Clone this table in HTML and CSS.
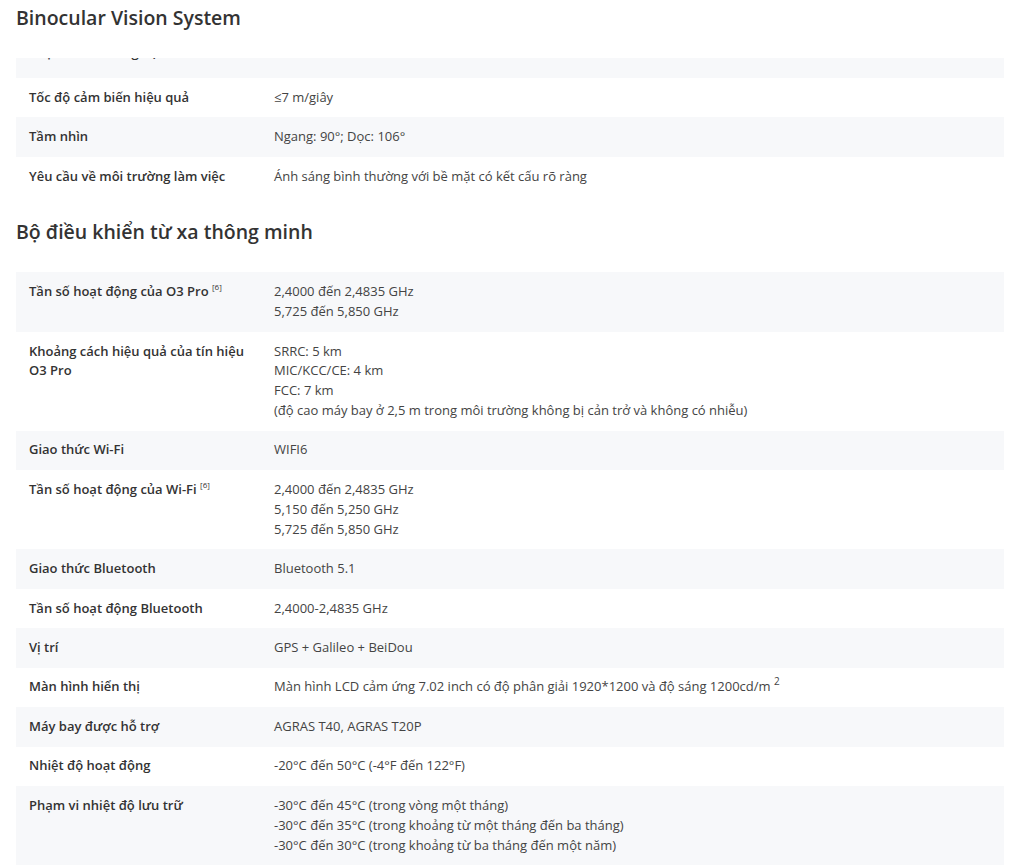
FILE: index.html
```html
<!DOCTYPE html>
<html lang="vi">
  <head>
    <meta charset="UTF-8" />
    <meta name="viewport" content="width=device-width, initial-scale=1.0" />
    <title>Thông số kỹ thuật</title>
    <link rel="stylesheet" href="styles.css">
  </head>
  <body>
    <section class="spec-section">
      <h2 class="section-title first">Binocular Vision System</h2>
      <div class="spec-table">
        <div class="clipped">
          <div class="spec-row">
            <div class="spec-label">Phạm vi đo lường độ chính xác</div>
            <div class="spec-value">0.5-40 m</div>
          </div>
        </div>
        <div class="spec-row">
          <div class="spec-label">Tốc độ cảm biến hiệu quả</div>
          <div class="spec-value">≤7 m/giây</div>
        </div>
        <div class="spec-row">
          <div class="spec-label">Tầm nhìn</div>
          <div class="spec-value">Ngang: 90°; Dọc: 106°</div>
        </div>
        <div class="spec-row">
          <div class="spec-label">Yêu cầu về môi trường làm việc</div>
          <div class="spec-value">Ánh sáng bình thường với bề mặt có kết cấu rõ ràng</div>
        </div>
      </div>
    </section>

    <section class="spec-section">
      <h2 class="section-title">Bộ điều khiển từ xa thông minh</h2>
      <div class="spec-table">
        <div class="spec-row">
          <div class="spec-label">Tần số hoạt động của O3 Pro <sup>[6]</sup></div>
          <div class="spec-value">2,4000 đến 2,4835 GHz<br>5,725 đến 5,850 GHz</div>
        </div>
        <div class="spec-row">
          <div class="spec-label">Khoảng cách hiệu quả của tín hiệu O3 Pro</div>
          <div class="spec-value">
            SRRC: 5 km<br>MIC/KCC/CE: 4 km<br>FCC: 7 km<br>(độ cao máy bay ở 2,5 m trong môi trường không bị cản trở và không có nhiễu)
          </div>
        </div>
        <div class="spec-row">
          <div class="spec-label">Giao thức Wi-Fi</div>
          <div class="spec-value">WIFI6</div>
        </div>
        <div class="spec-row">
          <div class="spec-label">Tần số hoạt động của Wi-Fi <sup>[6]</sup></div>
          <div class="spec-value">2,4000 đến 2,4835 GHz<br>5,150 đến 5,250 GHz<br>5,725 đến 5,850 GHz</div>
        </div>
        <div class="spec-row">
          <div class="spec-label">Giao thức Bluetooth</div>
          <div class="spec-value">Bluetooth 5.1</div>
        </div>
        <div class="spec-row">
          <div class="spec-label">Tần số hoạt động Bluetooth</div>
          <div class="spec-value">2,4000-2,4835 GHz</div>
        </div>
        <div class="spec-row">
          <div class="spec-label">Vị trí</div>
          <div class="spec-value">GPS + Galileo + BeiDou</div>
        </div>
        <div class="spec-row">
          <div class="spec-label">Màn hình hiển thị</div>
          <div class="spec-value">Màn hình LCD cảm ứng 7.02 inch có độ phân giải 1920*1200 và độ sáng 1200cd/m <sup class="unit">2</sup></div>
        </div>
        <div class="spec-row">
          <div class="spec-label">Máy bay được hỗ trợ</div>
          <div class="spec-value">AGRAS T40, AGRAS T20P</div>
        </div>
        <div class="spec-row">
          <div class="spec-label">Nhiệt độ hoạt động</div>
          <div class="spec-value">-20°C đến 50°C (-4°F đến 122°F)</div>
        </div>
        <div class="spec-row">
          <div class="spec-label">Phạm vi nhiệt độ lưu trữ</div>
          <div class="spec-value">-30°C đến 45°C (trong vòng một tháng)<br>-30°C đến 35°C (trong khoảng từ một tháng đến ba tháng)<br>-30°C đến 30°C (trong khoảng từ ba tháng đến một năm)</div>
        </div>
      </div>
    </section>
  </body>
</html>
```

FILE: styles.css
```css
body {
  font-family: 'Open Sans', 'Noto Sans', sans-serif;
  margin: 0;
  padding: 0 20px 0 16px;
  background-color: #fff;
  color: #333;
  overflow: hidden;
}
.section-title {
  font-size: 19.5px;
  line-height: 28px;
  font-weight: 600;
  color: #333;
  margin: 22px 0 26px;
}
.section-title.first {
  margin-top: 4px;
}
.spec-table {
  font-size: 13px;
  line-height: 19.8px;
}
.spec-row {
  display: grid;
  grid-template-columns: 245px 1fr;
}
.spec-table > .spec-row:nth-child(odd),
.clipped .spec-row {
  background-color: #f7f8fa;
}
.clipped {
  height: 20px;
  overflow: hidden;
  display: flex;
  flex-direction: column;
  justify-content: flex-end;
}
.spec-label,
.spec-value {
  padding: 9.85px 13px;
}
.clipped .spec-label,
.clipped .spec-value {
  padding-bottom: 15.5px;
}
.spec-label {
  font-weight: 600;
  color: #333;
}
.spec-value {
  color: #444;
}
sup {
  font-size: 8px;
  line-height: 0;
  vertical-align: 6px;
  font-weight: 400;
}
sup.unit {
  font-size: 10px;
}
```
